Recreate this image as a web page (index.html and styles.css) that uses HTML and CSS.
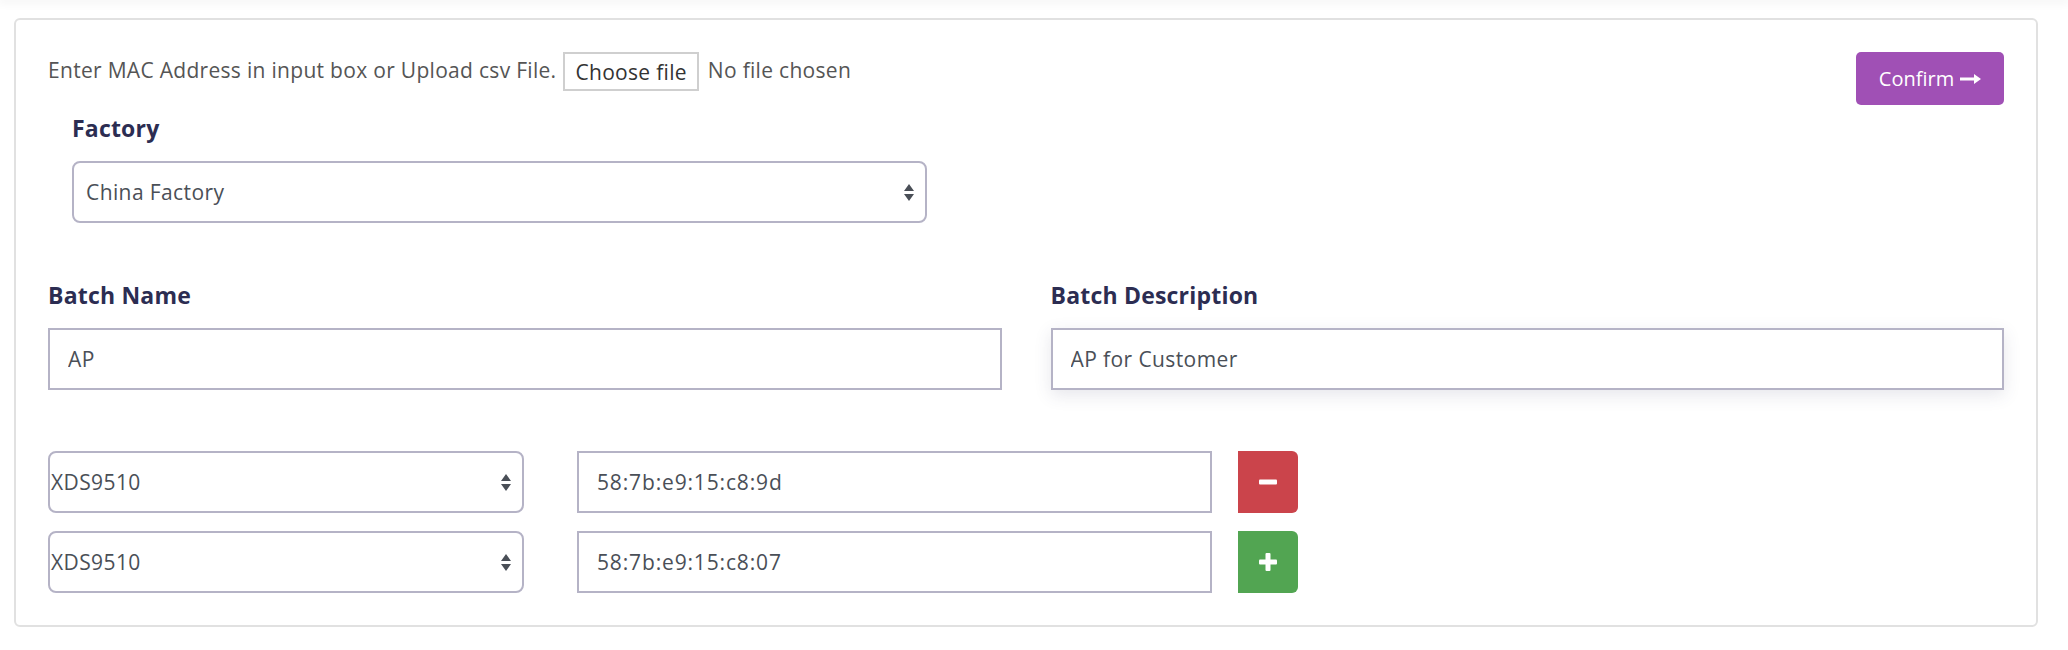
FILE: index.html
```html
<!DOCTYPE html>
<html lang="en">

<head>
    <meta charset="UTF-8">
    <meta name="viewport" content="width=device-width, initial-scale=1.0">
    <link rel="stylesheet" href="styles.css">
    <title>Add Batch</title>
</head>

<body>

    <div class="topbar"></div>

    <section class="card">

        <div class="upload-row">
            <div class="upload">
                <span class="upload-text">Enter MAC Address in input box or Upload csv File.</span>
                <span class="file-button">Choose file</span>
                <span class="file-name">No file chosen</span>
            </div>
            <a href="#" class="btn-confirm">Confirm
                <svg width="21" height="12" viewBox="0 0 21 12">
                    <path d="M0 4.6H14V1L21 6L14 11V7.4H0Z" fill="#fff" />
                </svg>
            </a>
        </div>

        <div class="factory">
            <label class="field-label">Factory</label>
            <div class="select">
                <span>China Factory</span>
                <svg class="select-arrow" width="10" height="17" viewBox="0 0 10 17">
                    <path d="M5 0L10 7H0Z M5 17L0 10H10Z" fill="#4a4f57" />
                </svg>
            </div>
        </div>

        <div class="batch-grid">
            <div>
                <label class="field-label">Batch Name</label>
                <input class="text-input" type="text" value="AP">
            </div>
            <div>
                <label class="field-label">Batch Description</label>
                <input class="text-input focused" type="text" value="AP for Customer">
            </div>
        </div>

        <div class="mac-list">
            <div class="mac-row">
                <div class="select mac-select">
                    <span>XDS9510</span>
                    <svg class="select-arrow" width="10" height="17" viewBox="0 0 10 17">
                        <path d="M5 0L10 7H0Z M5 17L0 10H10Z" fill="#4a4f57" />
                    </svg>
                </div>
                <input class="text-input mac-input" type="text" value="58:7b:e9:15:c8:9d">
                <a href="#" class="btn-square btn-remove">
                    <svg width="18" height="18" viewBox="0 0 18 18">
                        <rect x="0" y="6.5" width="18" height="5" rx="1" fill="#fff" />
                    </svg>
                </a>
            </div>
            <div class="mac-row">
                <div class="select mac-select">
                    <span>XDS9510</span>
                    <svg class="select-arrow" width="10" height="17" viewBox="0 0 10 17">
                        <path d="M5 0L10 7H0Z M5 17L0 10H10Z" fill="#4a4f57" />
                    </svg>
                </div>
                <input class="text-input mac-input" type="text" value="58:7b:e9:15:c8:07">
                <a href="#" class="btn-square btn-add">
                    <svg width="18" height="18" viewBox="0 0 18 18">
                        <rect x="0" y="6.5" width="18" height="5" rx="1" fill="#fff" />
                        <rect x="6.5" y="0" width="5" height="18" rx="1" fill="#fff" />
                    </svg>
                </a>
            </div>
        </div>

    </section>

</body>

</html>
```

FILE: styles.css
```css
* {
    box-sizing: border-box;
    font-family: "Open Sans", Lato, sans-serif;
}

body {
    margin: 0;
    background-color: #fff;
    color: #555;
}

.topbar {
    height: 0;
    box-shadow: 0 0 10px 2px rgba(0, 0, 0, 0.08);
}

.card {
    margin: 18px 30px 0 14px;
    padding: 32px;
    border: 2px solid #e1e1e1;
    border-radius: 6px;
}

.upload-row {
    display: flex;
    justify-content: space-between;
    align-items: flex-start;
}

.upload {
    display: flex;
    align-items: center;
    font-size: 21px;
    letter-spacing: 0.3px;
}

.upload-text {
    color: #555;
    margin-top: -4px;
}

.file-button {
    margin-left: 7px;
    height: 39px;
    padding: 0 10px;
    display: flex;
    align-items: center;
    border: 2px solid #cfcfcf;
    color: #333;
}

.file-name {
    margin-left: 9px;
    margin-top: -4px;
    color: #555;
}

.btn-confirm {
    display: flex;
    align-items: center;
    gap: 6px;
    height: 53px;
    width: 148px;
    justify-content: center;
    background-color: #a050b5;
    border-radius: 5px;
    color: #fff;
    font-size: 20px;
    text-decoration: none;
}

.factory {
    margin-top: 10px;
    margin-left: 24px;
    width: 855px;
}

.field-label {
    display: block;
    font-size: 23px;
    line-height: 26px;
    letter-spacing: 0.2px;
    font-weight: 700;
    color: #2c2d52;
    margin-bottom: 20px;
}

.select {
    display: flex;
    align-items: center;
    justify-content: space-between;
    height: 62px;
    padding: 0 11px 0 12px;
    border: 2px solid #b5b3c6;
    border-radius: 8px;
    font-size: 21px;
    letter-spacing: 0.4px;
    color: #4a4f57;
}

.text-input {
    display: block;
    width: 100%;
    height: 62px;
    padding: 0 18px;
    border: 2px solid #b5b3c6;
    border-radius: 0;
    font-size: 21px;
    letter-spacing: 0.4px;
    color: #4a4f57;
    background-color: #fff;
    outline: none;
}

.focused {
    box-shadow: 0 5px 16px rgba(60, 60, 100, 0.13);
}

.batch-grid {
    margin-top: 59px;
    display: grid;
    grid-template-columns: 1fr 1fr;
    gap: 49px;
}

.mac-list {
    margin-top: 61px;
    display: flex;
    flex-direction: column;
    gap: 18px;
}

.mac-row {
    display: flex;
    align-items: center;
}

.mac-select {
    width: 476px;
    padding-left: 1px;
}

.mac-input {
    margin-left: 53px;
    width: 635px;
    letter-spacing: 0.85px;
}

.btn-square {
    margin-left: 26px;
    width: 60px;
    height: 62px;
    display: flex;
    align-items: center;
    justify-content: center;
    border-radius: 0 6px 6px 0;
}

.btn-remove {
    background-color: #cb444b;
}

.btn-add {
    background-color: #52a552;
}
```
